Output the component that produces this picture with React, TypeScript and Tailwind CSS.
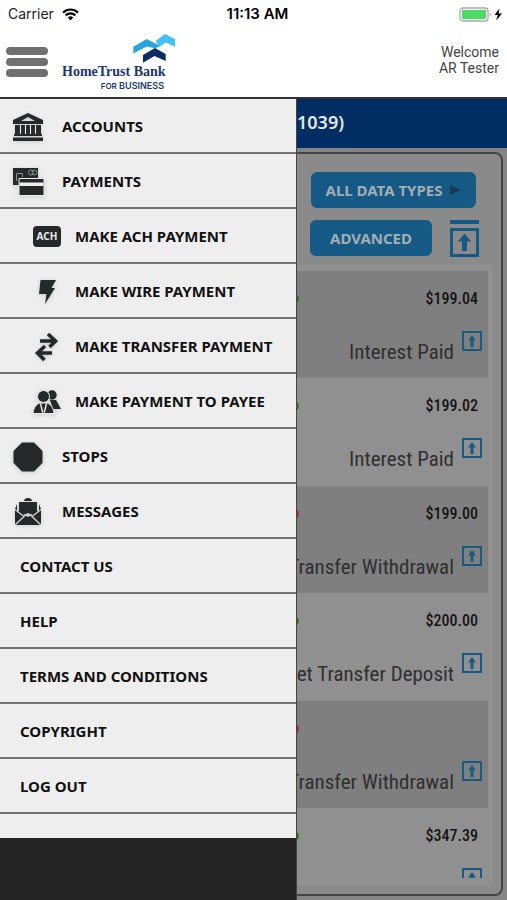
import type { ReactNode } from "react";
import clsx from "clsx";

type MenuItem = {
  label: string;
  icon?: ReactNode;
  level?: "top" | "sub";
};

type Transaction = {
  id: number;
  amount?: string;
  description: string;
  tone: "credit" | "debit";
};

const MENU_ITEMS: MenuItem[] = [
  { label: "ACCOUNTS", icon: <BankIcon />, level: "top" },
  { label: "PAYMENTS", icon: <CardsIcon />, level: "top" },
  { label: "MAKE ACH PAYMENT", icon: <AchIcon />, level: "sub" },
  { label: "MAKE WIRE PAYMENT", icon: <BoltIcon />, level: "sub" },
  { label: "MAKE TRANSFER PAYMENT", icon: <TransferIcon />, level: "sub" },
  { label: "MAKE PAYMENT TO PAYEE", icon: <PayeeIcon />, level: "sub" },
  { label: "STOPS", icon: <StopIcon />, level: "top" },
  { label: "MESSAGES", icon: <MessageIcon />, level: "top" },
  { label: "CONTACT US" },
  { label: "HELP" },
  { label: "TERMS AND CONDITIONS" },
  { label: "COPYRIGHT" },
  { label: "LOG OUT" },
];

const TRANSACTIONS: Transaction[] = [
  { id: 1, amount: "$199.04", description: "Interest Paid", tone: "credit" },
  { id: 2, amount: "$199.02", description: "Interest Paid", tone: "credit" },
  { id: 3, amount: "$199.00", description: "Transfer Withdrawal", tone: "debit" },
  { id: 4, amount: "$200.00", description: "net Transfer Deposit", tone: "credit" },
  { id: 5, description: "Transfer Withdrawal", tone: "debit" },
  { id: 6, amount: "$347.39", description: "", tone: "credit" },
];

export default function App() {
  return (
    <div className="flex h-screen flex-col overflow-hidden bg-white font-['Noto_Sans',sans-serif]">
      <StatusBar />
      <Header />
      <main className="relative flex min-h-0 flex-1 flex-col bg-[#858585]">
        <AccountActivity />
        <Drawer />
      </main>
    </div>
  );
}

function StatusBar() {
  return (
    <div className="grid h-7 shrink-0 grid-cols-3 items-center px-2 font-['Inter',sans-serif] text-sm text-[#222]">
      <div className="flex items-center gap-2">
        <span>Carrier</span>
        <svg width="17" height="13" viewBox="0 0 17 13" fill="none" stroke="#000" strokeWidth="2.2">
          <path d="M1 4.6a10.6 10.6 0 0 1 15 0M3.7 7.4a6.8 6.8 0 0 1 9.6 0" />
          <path d="M8.5 12.4 5.8 9.6a3.9 3.9 0 0 1 5.4 0Z" fill="#000" stroke="none" />
        </svg>
      </div>
      <span className="pl-2 text-center text-[15px] font-semibold text-black">11:13 AM</span>
      <div className="flex justify-end">
        <svg width="44" height="15" viewBox="0 0 44 15" className="-mr-1">
          <rect x="1" y="1" width="28" height="13" rx="3" fill="#fff" stroke="#a9a9a9" strokeWidth="1.3" />
          <rect x="3" y="3" width="24" height="9" rx="1" fill="#4cd964" />
          <path d="M30.6 5.5c1.6.4 1.6 3.6 0 4Z" fill="#a9a9a9" />
          <path d="M40.6 1.5 35.5 8h3.2l-1.5 5.5L43 6.6h-3.4Z" fill="#000" />
        </svg>
      </div>
    </div>
  );
}

function Header() {
  return (
    <header className="flex h-[71px] shrink-0 items-start justify-between border-b-2 border-[#333] pr-2 pl-1">
      <div className="flex items-start gap-3">
        <button type="button" aria-label="Menu" className="mt-[19px] ml-[2px] flex w-[42px] flex-col gap-[3px]">
          <span className="h-2 w-full rounded-full bg-[#707070]" />
          <span className="h-2 w-full rounded-full bg-[#707070]" />
          <span className="h-2 w-full rounded-full bg-[#707070]" />
        </button>
        <Logo />
      </div>
      <p className="mt-4 text-right font-['Roboto',sans-serif] text-sm leading-4 text-[#444]">
        Welcome
        <br />
        AR Tester
      </p>
    </header>
  );
}

function Logo() {
  return (
    <div className="flex flex-col pt-[6px] pl-[2px] text-[#1b376f]">
      <svg width="42" height="29" viewBox="0 0 42 29" className="ml-[71px]">
        <path d="M22.5 7 32 0l10 5v7.7l-9-4.2-6.500 4.200Z" fill="#43c3f3" />
        <path d="M.3 12.700 13.700 5l9.800 5 3.500 2.200-5 2-8.300-1.700L.3 19.500Z" fill="#29a5de" />
        <path d="M10 21 22 14 32.700 20v7L21.500 22 10 28.800Z" fill="#0c2c66" />
      </svg>
      <span className="font-['Liberation_Serif',serif] text-sm leading-[17px] font-bold">
        HomeTrust Bank
      </span>
      <span className="w-[102px] text-right font-['Inter',sans-serif] text-[9px] leading-3 font-semibold">
        <span className="text-[8px]">FOR</span> BUSINESS
      </span>
    </div>
  );
}

function Drawer() {
  return (
    <nav className="absolute inset-y-0 left-0 flex w-[297px] flex-col border-r border-[#444] bg-[#242424]">
      <ul className="bg-[#eee] pb-6">
        {MENU_ITEMS.map((item) => (
          <li key={item.label} className="border-b-2 border-[#737373]">
            <a
              href="#"
              className={clsx(
                "flex h-[53px] items-center pt-[2px] text-[15px] font-bold whitespace-nowrap text-[#111] [&>svg]:drop-shadow-sm",
                item.level === "top" && "gap-4 pl-3",
                item.level === "sub" && "gap-3 pl-[31px]",
                !item.level && "pl-5"
              )}
            >
              {item.icon}
              {item.label}
            </a>
          </li>
        ))}
      </ul>
    </nav>
  );
}

function AccountActivity() {
  return (
    <>
      <h1 className="h-[49px] shrink-0 bg-[#002e63] pl-[297px] text-lg leading-[46px] font-semibold text-[#e6e6e6]">
        1039)
      </h1>
      <section className="mx-1 mt-1 mb-1 flex min-h-0 flex-1 flex-col rounded-lg border-2 border-[#444] bg-[#8a8a8a] px-2 pb-2">
        <div className="flex flex-col items-end gap-3 pt-[18px] pr-[17px]">
          <button
            type="button"
            className="flex h-9 w-[165px] items-center justify-center gap-2 rounded-md bg-[#155a84] text-[15px] font-bold text-[#a2adb4]"
          >
            ALL DATA TYPES
            <svg width="11" height="10" viewBox="0 0 11 10" fill="#17395f">
              <path d="M0 0 11 5 0 10Z" />
            </svg>
          </button>
          <div className="flex items-start gap-[18px]">
            <button
              type="button"
              className="h-9 w-[122px] rounded-md bg-[#155a84] text-[15px] font-bold text-[#a2adb4]"
            >
              ADVANCED
            </button>
            <button type="button" aria-label="Scroll to top" className="-mr-[3px]">
              <svg width="29" height="37" viewBox="0 0 29 37" fill="#155a84">
                <path d="M0 0h29v4H0ZM0 8h29v29H0Zm3 3v23h23V11Z" fillRule="evenodd" />
                <path d="m14.500 13.500 6.500 8h-4V31h-5v-9.500H8Z" />
              </svg>
            </button>
          </div>
        </div>
        <div className="mt-2 flex min-h-0 flex-1 flex-col overflow-hidden bg-[#909090] pt-[6px] pr-[5px] pb-2">
          <ul className="min-h-0 flex-1 overflow-hidden">
            {TRANSACTIONS.map((t) => (
              <TransactionRow key={t.id} transaction={t} />
            ))}
          </ul>
        </div>
      </section>
    </>
  );
}

function TransactionRow({ transaction }: { transaction: Transaction }) {
  const { amount, description, tone } = transaction;

  return (
    <li className="h-[108px] pt-4 font-['Liberation_Sans_Narrow','Roboto_Condensed',sans-serif] odd:h-[107px] odd:bg-[#7f7f7f]">
      <div className="flex h-6 items-center justify-end pr-[10px]">
        <span
          className={clsx(
            "h-[10px] w-[10px] rounded-full",
            tone === "credit" ? "bg-[#39731f]" : "bg-[#a32c3a]"
          )}
        />
        <span className="w-[179px] text-right text-base font-medium text-[#151515]">{amount}</span>
      </div>
      <div className="mt-5 flex items-start justify-end gap-2 pr-[6px]">
        <span className="pt-[7px] text-[21px] leading-7 whitespace-nowrap text-[#2f2f2f]">
          {description}
        </span>
        <button type="button" aria-label="Show details">
          <svg width="20" height="20" viewBox="0 0 20 20" fill="#155a84">
            <path d="M0 0h20v20H0Zm2 2v16h16V2Z" fillRule="evenodd" />
            <path d="m10 4 4 5.500h-2.500V16h-3V9.500H6Z" />
          </svg>
        </button>
      </div>
    </li>
  );
}

function BankIcon() {
  return (
    <svg width="34" height="32" viewBox="0 0 34 32" fill="#25292a">
      <path d="M16 2 1 9v4h30V9Zm0 4 7 4H9Z" fillRule="evenodd" />
      <path d="M3 14h26v10H3Z" />
      <path d="M8.500 14v9.500M13.500 14v9.500M18.500 14v9.500M23.500 14v9.500" stroke="#eee" strokeWidth="1.100" />
      <path d="M2 23h28v2H2ZM1 26.500h30V30H1Z" />
    </svg>
  );
}

function CardsIcon() {
  return (
    <svg width="34" height="30" viewBox="0 0 34 30">
      <path d="M1 1h25v17H1Z" fill="#25292a" />
      <g fill="none" stroke="#8a8d8e">
        <circle cx="19" cy="5.500" r="2.500" />
        <circle cx="22.500" cy="5.500" r="2.500" />
        <path d="M4.500 14V6.500h6V10" />
      </g>
      <path d="M7 11.500h25v17H7Z" fill="#25292a" stroke="#eee" />
      <path d="M7.500 15.500h24v3.500h-24Z" fill="#eee" />
    </svg>
  );
}

function AchIcon() {
  return (
    <span className="flex h-[21px] w-8 items-center justify-center">
      <span className="flex h-full w-7 items-center justify-center rounded-sm bg-[#25292a] text-[10px] text-[#eee]">
        ACH
      </span>
    </span>
  );
}

function BoltIcon() {
  return (
    <svg width="32" height="26" viewBox="0 0 32 26" fill="#25292a">
      <path d="M9.500 1H25l-4.500 8H24L14 25l1.500-10H8Z" />
    </svg>
  );
}

function TransferIcon() {
  return (
    <svg width="32" height="30" viewBox="0 0 32 30" fill="none" stroke="#25292a" strokeWidth="3.600">
      <path d="M9 9h15M17 2l7.500 7-6 6M21 21H7M14 14l-7.500 7 7 7" />
    </svg>
  );
}

function PayeeIcon() {
  return (
    <svg width="32" height="26" viewBox="0 0 32 26" fill="#25292a">
      <circle cx="21" cy="6" r="4.700" />
      <path d="M19 11h6l5 9h-8Z" />
      <circle cx="12.500" cy="7.500" r="6" stroke="#eee" />
      <path d="M2 24.500c.5-6 3.500-9.500 7-10.500h7c3.500 1 6.500 4.500 7 10.500Z" stroke="#eee" />
      <path d="m9.500 14.500 2.200 9M15.500 14.500l-2.200 9" stroke="#eee" strokeWidth="1.400" />
    </svg>
  );
}

function StopIcon() {
  return (
    <svg width="34" height="32" viewBox="0 0 34 32" fill="#25292a">
      <path d="M10 1.500h12l8.500 8.500v12l-8.500 8.500H10L1.500 22V10Z" />
    </svg>
  );
}

function MessageIcon() {
  return (
    <svg width="34" height="30" viewBox="0 0 34 30" fill="#25292a">
      <path d="M12 4c0-4 8-4 8 0ZM7 5h18v12H7ZM5 7v7l-2-2ZM27 7v7l2-2Z" />
      <path d="M3 12 16 20 29 12V28H3Z" />
      <path d="M3 12.500 12 19.500 3 28M29 12.500 20 19.500 29 28M12 19.500 16 16.500 20 19.500" fill="none" stroke="#d5d5d5" strokeWidth="1.300" />
    </svg>
  );
}
